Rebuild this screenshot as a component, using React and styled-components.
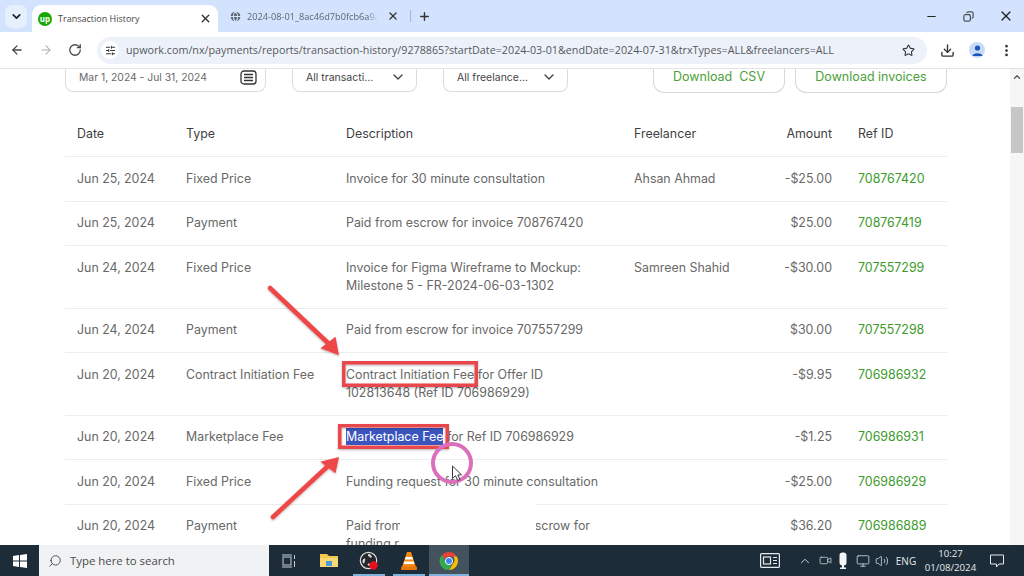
import React from 'react';
import styled, { createGlobalStyle } from 'styled-components';
import {
  ArrowLeft,
  ArrowRight,
  ChevronDown,
  ChevronUp,
  Copy,
  Download,
  EllipsisVertical,
  Globe,
  Minus,
  Monitor,
  Plus,
  RotateCw,
  Search,
  SlidersHorizontal,
  Star,
  Video,
  Volume2,
  X,
} from 'lucide-react';

const GlobalStyle = createGlobalStyle`
  html, body {
    margin: 0;
    padding: 0;
    background: #fff;
  }
  body {
    font-family: Inter, "Liberation Sans", sans-serif;
  }
`;

const Page = styled.div`
  display: flex;
  flex-direction: column;
  height: 576px;
  overflow: hidden;
  position: relative;
  width: 1024px;
`;

/* browser chrome */
const TabStrip = styled.div`
  align-items: flex-end;
  background: #d3e3fd;
  display: flex;
  flex-shrink: 0;
  height: 32px;
  padding-left: 5px;
`;

const TabListButton = styled.div`
  align-items: center;
  align-self: flex-start;
  background: #e6effd;
  border-radius: 7px;
  color: #1f1f1f;
  display: flex;
  height: 23px;
  justify-content: center;
  margin: 5px 5px 0 0;
  width: 22px;
`;

const ActiveTab = styled.div`
  align-items: center;
  background: #fff;
  border-radius: 9px 9px 0 0;
  box-sizing: border-box;
  color: #454545;
  display: flex;
  font-family: "Open Sans", sans-serif;
  font-size: 9px;
  height: 27px;
  padding: 0 6px;
  width: 186px;
`;

const TabTitle = styled.span`
  flex: 1;
  margin-left: 6px;
  white-space: nowrap;
`;

const UpLogo = styled.span`
  align-items: center;
  background: #14a800;
  border-radius: 50%;
  color: #fff;
  display: flex;
  flex-shrink: 0;
  font-size: 8px;
  font-weight: 700;
  height: 14px;
  justify-content: center;
  line-height: 1;
  width: 14px;
`;

const IdleTab = styled.div`
  align-items: center;
  align-self: stretch;
  color: #5d6670;
  display: flex;
  font-family: "Open Sans", sans-serif;
  font-size: 9.2px;
  margin-left: 11px;
  width: 174px;
`;

const FadedTitle = styled.span`
  margin-left: 5px;
  overflow: hidden;
  white-space: nowrap;
  width: 131px;
  -webkit-mask-image: linear-gradient(to right, #000 92%, transparent);
  mask-image: linear-gradient(to right, #000 92%, transparent);
`;

const TabAction = styled.span`
  align-items: center;
  align-self: stretch;
  color: #333;
  display: flex;
  margin-left: ${props => props.$offset || 0}px;
`;

const TabDivider = styled.span`
  align-self: center;
  background: #a9b6c9;
  height: 12px;
  margin-left: 7px;
  width: 1px;
`;

const WindowControls = styled.div`
  align-items: stretch;
  align-self: stretch;
  color: #1f1f1f;
  display: flex;
  margin-left: auto;
`;

const WindowButton = styled.span`
  align-items: center;
  display: flex;
  justify-content: center;
  width: 37px;
`;

const Toolbar = styled.div`
  align-items: center;
  background: #fff;
  border-bottom: 1px solid #e1e3e6;
  box-sizing: border-box;
  color: #474747;
  display: flex;
  flex-shrink: 0;
  height: 37px;
  padding: 0 10px;
`;

const NavIcons = styled.div`
  align-items: center;
  display: flex;
  gap: 15px;
`;

const Omnibox = styled.div`
  align-items: center;
  background: #edf2fa;
  border-radius: 14px;
  box-sizing: border-box;
  color: #55585c;
  display: flex;
  font-family: "Open Sans", sans-serif;
  font-size: 10.75px;
  height: 27px;
  margin-left: 15px;
  padding: 0 12px 0 4px;
  width: 831px;
`;

const TuneBadge = styled.span`
  align-items: center;
  background: #fff;
  border-radius: 50%;
  color: #333;
  display: flex;
  height: 18px;
  justify-content: center;
  margin-right: 7px;
  width: 18px;
`;

const Url = styled.span`
  flex: 1;
  white-space: nowrap;
`;

const ToolbarRight = styled.div`
  align-items: center;
  display: flex;
  gap: 14px;
  margin-left: 13px;
`;

const Avatar = styled.span`
  align-items: center;
  background: #c7dbf8;
  border-radius: 50%;
  display: flex;
  height: 16px;
  justify-content: center;
  width: 16px;
`;

/* page body */
const Viewport = styled.div`
  display: flex;
  flex: 1;
  min-height: 0;
`;

const Content = styled.main`
  box-sizing: border-box;
  flex: 1;
  overflow: hidden;
  padding-left: 65px;
`;

const Filters = styled.div`
  display: flex;
  height: 24px;
  width: 882px;
`;

const FilterBox = styled.div`
  align-items: center;
  border: 1px solid #dcdcdc;
  border-radius: 0 0 8px 8px;
  border-top: 0;
  box-sizing: border-box;
  color: ${props => props.$color || '#444'};
  display: flex;
  font-size: ${props => props.$size || 10.5}px;
  height: 23px;
  justify-content: space-between;
  margin-right: ${props => props.$gap}px;
  padding: 0 ${props => props.$pad}px 6px 13px;
  width: ${props => props.$width}px;
`;

const DownloadButton = styled.div`
  border: 1.5px solid #d8d8d8;
  border-radius: 0 0 11px 11px;
  border-top: 0;
  box-sizing: border-box;
  color: #4c9f38;
  font-size: 12.5px;
  height: 24px;
  margin-left: ${props => props.$offset}px;
  text-align: center;
  white-space: pre;
  width: ${props => props.$width}px;
`;

const Table = styled.div`
  margin-top: 19.5px;
  width: 882px;
`;

const Row = styled.div`
  border-bottom: 1px solid #ececec;
  color: ${props => (props.$head ? '#3f3f3f' : '#686868')};
  display: grid;
  font-size: 12.4px;
  grid-template-columns: 109px 160px 288px 130px 68px 1fr;
  line-height: 18px;
  padding: 12.75px 0 12.75px 12px;
`;

const Desc = styled.div`
  max-width: 258px;
`;

const Amount = styled.div`
  text-align: right;
  white-space: nowrap;
`;

const RefId = styled.div`
  color: ${props => (props.$head ? 'inherit' : '#3d9a2b')};
  padding-left: 26px;
`;

const Selected = styled.span`
  background: #3a55bd;
  color: #fff;
  padding: 1px 0;
`;

const Hidden = styled.span`
  display: inline-block;
  width: 129px;
`;

const Scrollbar = styled.div`
  background: #f6f6f6;
  color: #555;
  flex-shrink: 0;
  padding-top: 3px;
  text-align: center;
  width: 14px;
`;

const ScrollArrow = styled(ChevronUp)`
  display: block;
  margin: 0 auto;
`;

const ScrollThumb = styled.div`
  background: #c6c6c6;
  height: 46px;
  margin: 25px auto 0;
  width: 12px;
`;

/* annotations lying over the page */
const Drawing = styled.svg`
  left: 0;
  pointer-events: none;
  position: absolute;
  top: 0;
`;

const Patch = styled.div`
  background: #fff;
  height: 42px;
  left: 400px;
  position: absolute;
  top: 503px;
  width: 136px;
`;

/* taskbar */
const Taskbar = styled.footer`
  align-items: stretch;
  background: #1c2c38;
  color: #e6e9eb;
  display: flex;
  flex-shrink: 0;
  height: 31px;
  position: relative;
  z-index: 2;
`;

const StartButton = styled.div`
  align-items: center;
  display: flex;
  justify-content: center;
  width: 39px;
`;

const SearchBox = styled.div`
  align-items: center;
  background: #f1f2f3;
  box-sizing: border-box;
  color: #4a4a4a;
  display: flex;
  font-family: "Open Sans", sans-serif;
  font-size: 11.4px;
  gap: 8px;
  padding-left: 9px;
  width: 230px;
`;

const Apps = styled.div`
  display: flex;
`;

const AppSlot = styled.div`
  align-items: center;
  background: ${props => (props.$active ? '#43525c' : 'transparent')};
  display: flex;
  justify-content: center;
  position: relative;
  width: 40px;

  &::after {
    background: ${props => (props.$open ? '#7fb2dc' : 'transparent')};
    bottom: 0;
    content: '';
    height: 2px;
    left: ${props => (props.$active ? 0 : 4)}px;
    position: absolute;
    right: ${props => (props.$active ? 0 : 4)}px;
  }
`;

const Tray = styled.div`
  align-items: center;
  display: flex;
  margin-left: auto;
  padding-right: 10px;
`;

const TrayItem = styled.span`
  align-items: center;
  display: flex;
  justify-content: center;
  width: ${props => props.$width}px;
`;

const Lang = styled(TrayItem)`
  font-family: "Open Sans", sans-serif;
  font-size: 10px;
`;

const Clock = styled.div`
  font-family: "Open Sans", sans-serif;
  font-size: 9.7px;
  line-height: 14px;
  text-align: center;
  width: 59px;
`;

const rows = [
  { date: 'Jun 25, 2024', type: 'Fixed Price', desc: 'Invoice for 30 minute consultation', who: 'Ahsan Ahmad', amount: '-$25.00', ref: '708767420' },
  { date: 'Jun 25, 2024', type: 'Payment', desc: 'Paid from escrow for invoice 708767420', amount: '$25.00', ref: '708767419' },
  { date: 'Jun 24, 2024', type: 'Fixed Price', desc: 'Invoice for Figma Wireframe to Mockup: Milestone 5 - FR-2024-06-03-1302', who: 'Samreen Shahid', amount: '-$30.00', ref: '707557299' },
  { date: 'Jun 24, 2024', type: 'Payment', desc: 'Paid from escrow for invoice 707557299', amount: '$30.00', ref: '707557298' },
  { date: 'Jun 20, 2024', type: 'Contract Initiation Fee', desc: 'Contract Initiation Fee for Offer ID 102813648 (Ref ID 706986929)', amount: '-$9.95', ref: '706986932' },
  { date: 'Jun 20, 2024', type: 'Marketplace Fee', desc: <><Selected>Marketplace Fee</Selected> for Ref ID 706986929</>, amount: '-$1.25', ref: '706986931' },
  { date: 'Jun 20, 2024', type: 'Fixed Price', desc: 'Funding request for 30 minute consultation', amount: '-$25.00', ref: '706986929' },
  { date: 'Jun 20, 2024', type: 'Payment', desc: <>Paid from <Hidden />scrow for funding r</>, amount: '$36.20', ref: '706986889' },
];

const RED = '#ee4747';
const BOX_RED = '#e8474c';

const Annotations = () => (
  <Drawing width="1024" height="576" viewBox="0 0 1024 576">
    <defs>
      <filter id="soft" x="-20%" y="-20%" width="140%" height="140%">
        <feDropShadow dx="0" dy="1" stdDeviation="1" floodColor="#000" floodOpacity="0.3" />
      </filter>
    </defs>
    <g filter="url(#soft)">
      <path d="M270 288 L328 343" stroke={RED} strokeWidth="4.5" strokeLinecap="round" />
      <path d="M338 354 L322 348 L335 338 Z" fill={RED} stroke={RED} strokeWidth="1.5" />
      <path d="M273 517 L328 466" stroke={RED} strokeWidth="4.5" strokeLinecap="round" />
      <path d="M338 458 L335 472 L322 462 Z" fill={RED} stroke={RED} strokeWidth="1.5" />
      <rect x="343.75" y="362.75" width="132.5" height="22.5" fill="none" stroke={BOX_RED} strokeWidth="3.5" />
      <rect x="339.75" y="425.75" width="107.5" height="21.5" fill="none" stroke={BOX_RED} strokeWidth="3.5" />
    </g>
    <circle cx="452" cy="463" r="19" fill="none" stroke="#dc6fbb" strokeWidth="4" />
    <path d="M452.5 466 V478.5 L455.5 475.8 L457.8 480.5 L460 479.4 L457.8 475 L461.5 474.8 Z" fill="#fff" stroke="#222" strokeWidth="0.9" />
  </Drawing>
);

const ChromeLogo = () => (
  <svg width="20" height="20" viewBox="0 0 20 20">
    <path d="M10 1a9 9 0 0 1 7.8 4.5H10a4.5 4.5 0 0 0-4.2 2.9L3 3.9A9 9 0 0 1 10 1z" fill="#e94235" />
    <path d="M17.8 5.5A9 9 0 0 1 10.2 19l3.7-6.5a4.5 4.5 0 0 0 0-7z" fill="#fbbc04" />
    <path d="M3 3.9l3.9 6.9a4.5 4.5 0 0 0 5.4 2.6L10.2 19A9 9 0 0 1 3 3.9z" fill="#34a853" />
    <circle cx="10" cy="10" r="3.6" fill="#4285f4" stroke="#fff" strokeWidth="1" />
  </svg>
);

const WindowsLogo = () => (
  <svg width="14" height="14" viewBox="0 0 14 14" fill="#fff">
    <path d="M0 2 L6 1.1 V6.6 H0 Z M7 1 L14 0 V6.6 H7 Z M0 7.5 H6 V12.9 L0 12 Z M7 7.5 H14 V14 L7 13 Z" />
  </svg>
);

const FolderIcon = () => (
  <svg width="18" height="15" viewBox="0 0 18 15">
    <path d="M0 1 H7 L9 3 H18 V14 H0 Z" fill="#f3c64d" />
    <path d="M0 5 H18 V14 H0 Z" fill="#f8d775" />
    <rect x="6" y="8" width="6" height="5" fill="#4d9ad4" />
  </svg>
);

const ObsIcon = () => (
  <svg width="20" height="20" viewBox="0 0 20 20">
    <circle cx="9.5" cy="9.5" r="8.2" fill="#25252b" stroke="#ddd" strokeWidth="1.2" />
    <path d="M9 4 a3 3 0 0 1 3 2.5 M5 12 a3 3 0 0 1 1-4 M13 13 a3 3 0 0 1-4 0" stroke="#ddd" strokeWidth="2" fill="none" />
    <circle cx="14.5" cy="14.5" r="4.2" fill="#e8101c" />
  </svg>
);

const VlcIcon = () => (
  <svg width="18" height="20" viewBox="0 0 18 20">
    <path d="M7 1 H11 L16 16 H2 Z" fill="#f78a12" />
    <path d="M5.7 6 H12.3 L13 8.5 H5 Z M4.3 10.5 H13.7 L14.4 13 H3.6 Z" fill="#fff" />
    <rect x="1" y="15.5" width="16" height="3.5" rx="1" fill="#e9760b" />
  </svg>
);

const TaskViewIcon = () => (
  <svg width="14" height="14" viewBox="0 0 14 14" fill="none" stroke="#c9ced2" strokeWidth="1">
    <rect x="1" y="3" width="8" height="8" />
    <path d="M0 1 H10 M0 13 H10 M12.5 1 V5 M12.5 7 V13" />
  </svg>
);

const NewsIcon = () => (
  <svg width="20" height="15" viewBox="0 0 20 15" fill="none" stroke="#e6e9eb" strokeWidth="1.2">
    <rect x="0.6" y="0.6" width="18.8" height="13.8" rx="1" />
    <rect x="3.5" y="4" width="7" height="7" />
    <path d="M13 4.5 H17 M13 7.5 H17 M13 10.5 H17" />
  </svg>
);

const MicIcon = () => (
  <svg width="10" height="18" viewBox="0 0 10 18" fill="#f4f5f6">
    <rect x="1.5" y="0.5" width="7" height="13" rx="3" />
    <rect x="4" y="13" width="2" height="3" />
    <rect x="2" y="15.5" width="6" height="1.5" />
  </svg>
);

const NotificationIcon = () => (
  <svg width="14" height="14" viewBox="0 0 14 14" fill="none" stroke="#e6e9eb" strokeWidth="1">
    <path d="M0.5 1 H13.5 V10 H9 L6.5 13 V10 H0.5 Z" />
  </svg>
);

const App = () => (
  <Page>
    <GlobalStyle />
    <TabStrip>
      <TabListButton><ChevronDown size={13} strokeWidth={3} /></TabListButton>
      <ActiveTab>
        <UpLogo>up</UpLogo>
        <TabTitle>Transaction History</TabTitle>
        <X size={13} strokeWidth={2.6} color="#333" />
      </ActiveTab>
      <IdleTab>
        <Globe size={13} fill="#5d6670" color="#d3e3fd" />
        <FadedTitle>2024-08-01_8ac46d7b0fcb6a9a</FadedTitle>
        <TabAction $offset={9}><X size={12} strokeWidth={2.6} /></TabAction>
      </IdleTab>
      <TabDivider />
      <TabAction $offset={7}><Plus size={13} strokeWidth={2.6} /></TabAction>
      <WindowControls>
        <WindowButton><Minus size={13} strokeWidth={1.8} /></WindowButton>
        <WindowButton><Copy size={11} strokeWidth={2} transform="scale(-1 1)" /></WindowButton>
        <WindowButton><X size={16} strokeWidth={1.8} /></WindowButton>
      </WindowControls>
    </TabStrip>
    <Toolbar>
      <NavIcons>
        <ArrowLeft size={14} strokeWidth={2.2} />
        <ArrowRight size={14} strokeWidth={1.8} color="#a9adb2" />
        <RotateCw size={14} strokeWidth={2.2} />
      </NavIcons>
      <Omnibox>
        <TuneBadge><SlidersHorizontal size={11} strokeWidth={2.2} /></TuneBadge>
        <Url>upwork.com/nx/payments/reports/transaction-history/9278865?startDate=2024-03-01&amp;endDate=2024-07-31&amp;trxTypes=ALL&amp;freelancers=ALL</Url>
        <Star size={13} strokeWidth={2} color="#333" />
      </Omnibox>
      <ToolbarRight>
        <Download size={15} strokeWidth={2.2} color="#333" />
        <Avatar>
          <svg width="11" height="11" viewBox="0 0 11 11" fill="#1a56b8">
            <circle cx="5.5" cy="3" r="2.6" />
            <path d="M0.5 11 C0.5 7.4 10.5 7.4 10.5 11 Z" />
          </svg>
        </Avatar>
        <EllipsisVertical size={15} strokeWidth={2.4} color="#333" />
      </ToolbarRight>
    </Toolbar>
    <Viewport>
      <Content>
        <Filters>
          <FilterBox $width={201} $gap={26} $color="#6a6a6a" $pad={8} $size={10.35}>
            Mar 1, 2024 - Jul 31, 2024
            <svg width="17" height="15" viewBox="0 0 17 15" fill="none" stroke="#333" strokeWidth="1.3">
              <rect x="1" y="1" width="15" height="13" rx="3" />
              <path d="M4 4.5 H13 M4 7.5 H13 M4 10.5 H13" />
            </svg>
          </FilterBox>
          <FilterBox $width={125} $gap={26} $pad={10}>
            All transacti...
            <ChevronDown size={16} strokeWidth={2} />
          </FilterBox>
          <FilterBox $width={125} $gap={0} $pad={10}>
            All freelance...
            <ChevronDown size={16} strokeWidth={2} />
          </FilterBox>
          <DownloadButton $width={132} $offset={85}>Download  CSV</DownloadButton>
          <DownloadButton $width={152} $offset={10}>Download invoices</DownloadButton>
        </Filters>
        <Table>
          <Row $head>
            <div>Date</div>
            <div>Type</div>
            <div>Description</div>
            <div>Freelancer</div>
            <Amount>Amount</Amount>
            <RefId $head>Ref ID</RefId>
          </Row>
          {rows.map(row => (
            <Row key={row.ref}>
              <div>{row.date}</div>
              <div>{row.type}</div>
              <Desc>{row.desc}</Desc>
              <div>{row.who}</div>
              <Amount>{row.amount}</Amount>
              <RefId>{row.ref}</RefId>
            </Row>
          ))}
        </Table>
      </Content>
      <Scrollbar>
        <ScrollArrow size={10} strokeWidth={3} />
        <ScrollThumb />
      </Scrollbar>
    </Viewport>
    <Patch />
    <Annotations />
    <Taskbar>
      <StartButton><WindowsLogo /></StartButton>
      <SearchBox>
        <Search size={14} strokeWidth={1.6} transform="scale(-1 1)" />
        Type here to search
      </SearchBox>
      <Apps>
        <AppSlot><TaskViewIcon /></AppSlot>
        <AppSlot><FolderIcon /></AppSlot>
        <AppSlot $open><ObsIcon /></AppSlot>
        <AppSlot $open><VlcIcon /></AppSlot>
        <AppSlot $active $open><ChromeLogo /></AppSlot>
      </Apps>
      <Tray>
        <TrayItem $width={46}><NewsIcon /></TrayItem>
        <TrayItem $width={24}><ChevronUp size={14} strokeWidth={1.5} /></TrayItem>
        <TrayItem $width={16}><Video size={13} strokeWidth={1.3} /></TrayItem>
        <TrayItem $width={20}><MicIcon /></TrayItem>
        <TrayItem $width={20}><Monitor size={14} strokeWidth={1.3} /></TrayItem>
        <TrayItem $width={18}><Volume2 size={14} strokeWidth={1.3} /></TrayItem>
        <Lang $width={30}>ENG</Lang>
        <Clock>10:27<br />01/08/2024</Clock>
        <TrayItem $width={34}><NotificationIcon /></TrayItem>
      </Tray>
    </Taskbar>
  </Page>
);

export default App;
